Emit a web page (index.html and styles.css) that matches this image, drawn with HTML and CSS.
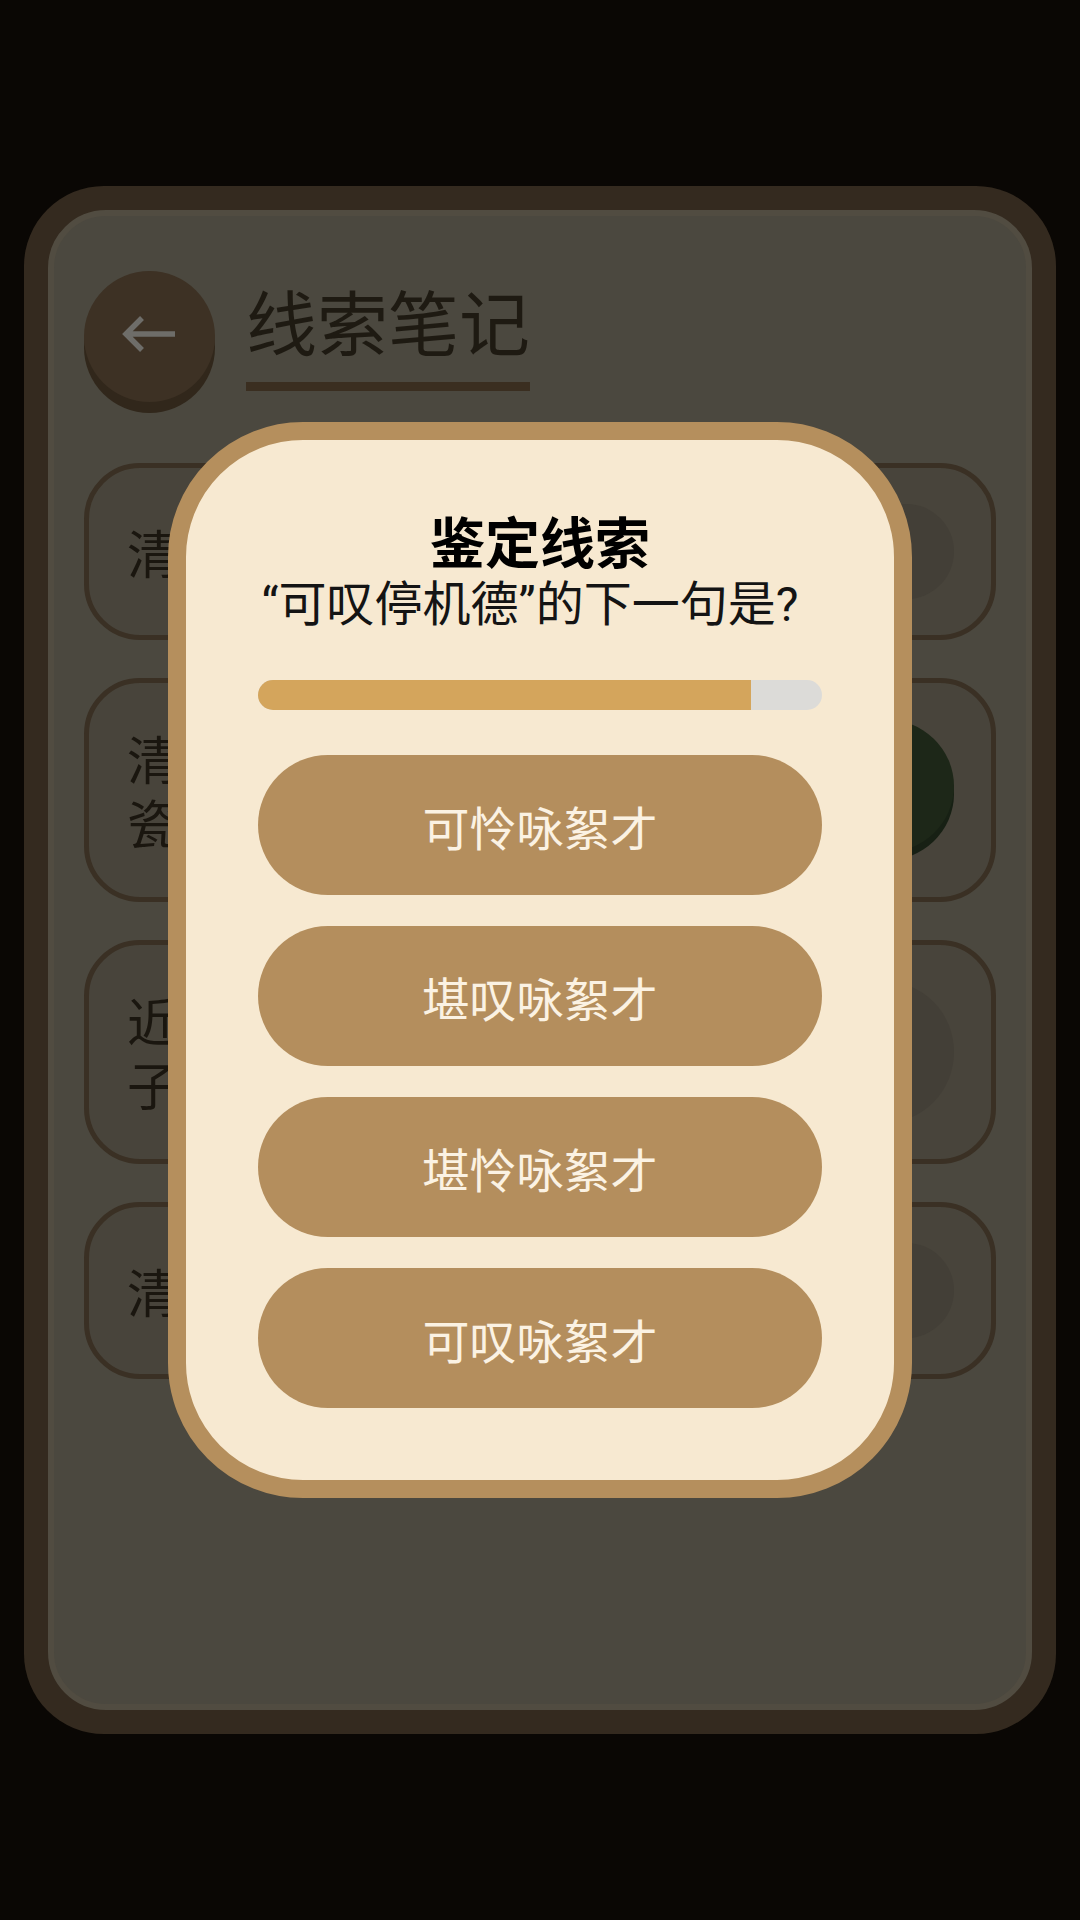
FILE: index.html
```html
<!DOCTYPE html>
<html lang="zh-CN">
<head>
<meta charset="utf-8">
<title>线索笔记</title>
<link rel="stylesheet" href="styles.css">
</head>
<body>
<div class="frame">
  <div class="panel">
    <div class="header">
      <div class="back">
        <svg width="131" height="131" viewBox="0 0 131 131">
          <path d="M91 63 H43 M58 47 L42 63 L58 79" fill="none" stroke="#6e6d69" stroke-width="5.5" stroke-linejoin="miter"/>
        </svg>
      </div>
      <div class="title-wrap">
        <div class="page-title">线索笔记</div>
        <div class="title-bar"></div>
      </div>
    </div>
    <div class="cards">
      <div class="card">
        <div class="card-text">清晨的陌生脚印</div>
        <div class="dot dot-small"></div>
      </div>
      <div class="card">
        <div class="card-text">清洗过的青花<br>瓷碗碎片</div>
        <div class="dot dot-big dot-green"></div>
      </div>
      <div class="card">
        <div class="card-text">近日出没的神秘男<br>子</div>
        <div class="dot dot-big"></div>
      </div>
      <div class="card">
        <div class="card-text">清单上消失的藏品</div>
        <div class="dot dot-small"></div>
      </div>
    </div>
  </div>
</div>

<div class="overlay">
  <div class="modal">
    <div class="modal-title">鉴定线索</div>
    <div class="modal-question">“可叹停机德”的下一句是?</div>
    <div class="progress"><div class="progress-fill" style="width: 87.4%"></div></div>
    <div class="options">
      <div class="option">可怜咏絮才</div>
      <div class="option">堪叹咏絮才</div>
      <div class="option">堪怜咏絮才</div>
      <div class="option">可叹咏絮才</div>
    </div>
  </div>
</div>
</body>
</html>
```

FILE: styles.css
```css
* { box-sizing: border-box; }

html, body {
  margin: 0;
  padding: 0;
}

body {
  width: 1080px;
  height: 1920px;
  overflow: hidden;
  background: #0a0704;
  font-family: "Noto Sans CJK SC", "Noto Sans", sans-serif;
  padding-top: 186px;
}

.frame {
  margin: 0 24px;
  height: 1548px;
  border-radius: 80px;
  background: #342a1f;
  padding: 24px;
}

.panel {
  height: 100%;
  border-radius: 58px;
  background: #4b483f;
  border: 6px solid #514c41;
  padding: 55px 30px 0 30px;
}

.header {
  display: flex;
  align-items: flex-start;
}

.back {
  width: 131px;
  height: 131px;
  border-radius: 50%;
  background: #3d3124;
  box-shadow: 0 11px 0 #31271b;
  flex-shrink: 0;
}

.back svg { display: block; }

.title-wrap {
  margin-left: 31px;
  margin-top: 12px;
  display: flex;
  flex-direction: column;
  align-items: flex-start;
}

.page-title {
  font-size: 71px;
  line-height: 72px;
  color: #1e1a12;
}

.title-bar {
  margin-top: 27px;
  height: 9px;
  width: 100%;
  background: #3a2e20;
}

.cards {
  margin-top: 61px;
  display: flex;
  flex-direction: column;
  gap: 38px;
}

.card {
  display: flex;
  align-items: center;
  justify-content: space-between;
  border: 5px solid #3a3024;
  background: #48443b;
  border-radius: 56px;
  padding: 36px 37px 36px 38px;
}

.card-text {
  font-size: 52px;
  line-height: 64px;
  color: #1a160f;
}

.dot {
  border-radius: 50%;
  background: #433f37;
  flex-shrink: 0;
}

.dot-small {
  width: 95px;
  height: 95px;
}

.dot-big {
  width: 140px;
  height: 142px;
}

.dot-green {
  height: 134px;
  width: 140px;
  margin-bottom: 8px;
  background: #1d2718;
  box-shadow: 0 8px 0 #172014;
}

.overlay {
  position: fixed;
  inset: 0;
  display: flex;
  align-items: center;
  justify-content: center;
}

.modal {
  width: 744px;
  border: 18px solid #b58f5d;
  border-radius: 135px;
  background: #f7e9d1;
  padding: 69px 72px 72px 72px;
  display: flex;
  flex-direction: column;
  align-items: stretch;
}

.modal-title {
  font-size: 55px;
  line-height: 60px;
  font-weight: 700;
  color: #000;
  text-align: center;
}

.modal-question {
  margin-top: 10px;
  font-family: Roboto, "Noto Sans CJK SC", sans-serif;
  font-size: 48px;
  line-height: 52px;
  color: #141414;
  text-align: center;
  white-space: nowrap;
  padding-right: 20px;
}

.progress {
  margin-top: 49px;
  height: 30px;
  border-radius: 15px;
  background: #dcdbd8;
  overflow: hidden;
}

.progress-fill {
  height: 100%;
  background: #d4a55c;
}

.options {
  margin-top: 45px;
  display: flex;
  flex-direction: column;
  gap: 31px;
}

.option {
  height: 140px;
  border-radius: 70px;
  background: #b48e5d;
  color: #fbf2e3;
  font-size: 47px;
  display: flex;
  align-items: center;
  justify-content: center;
}
```
